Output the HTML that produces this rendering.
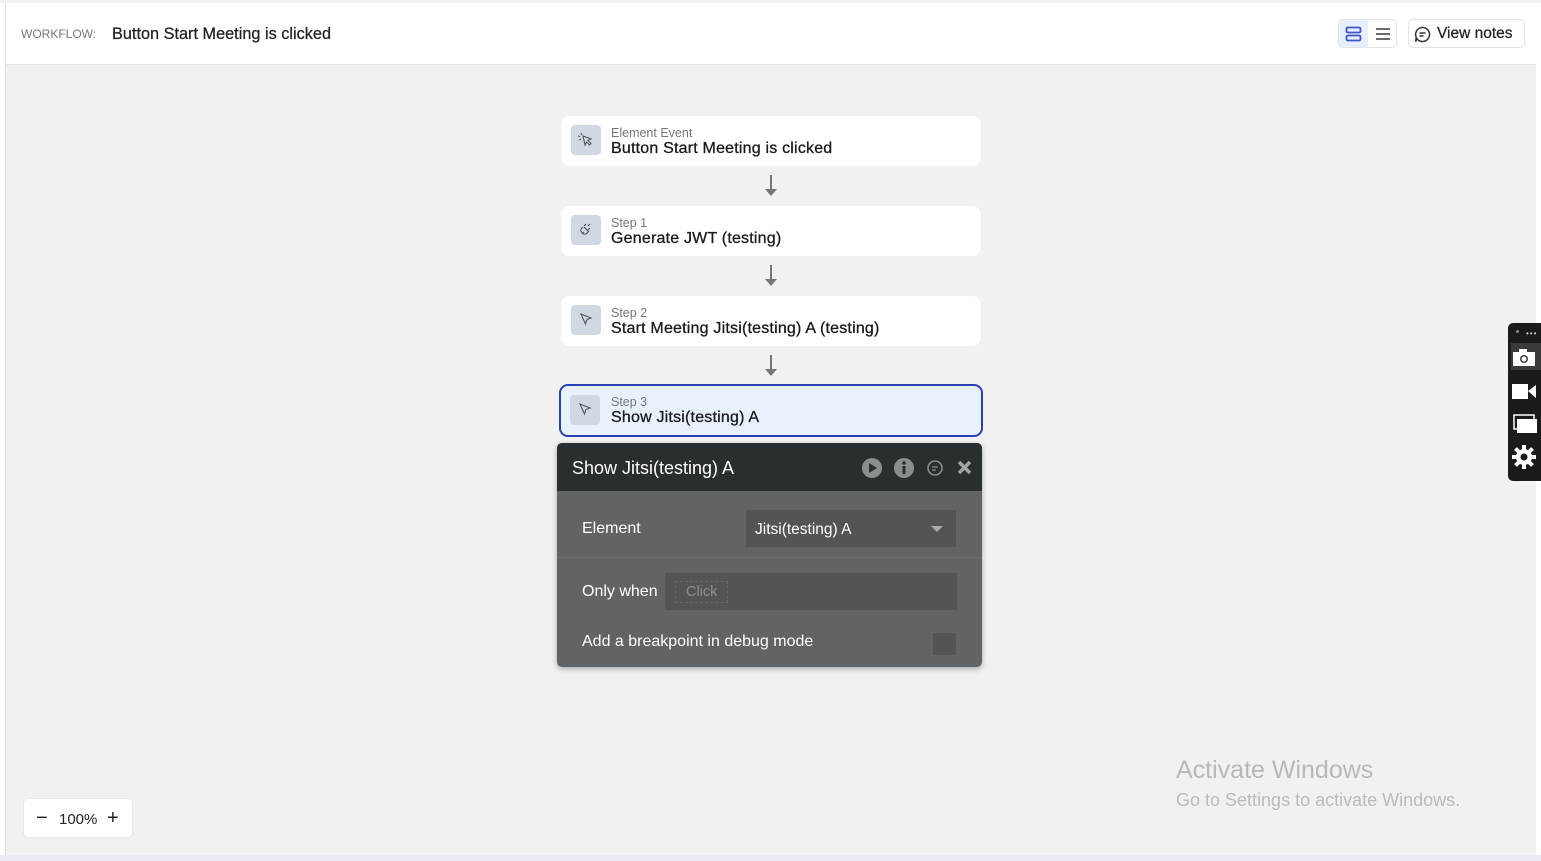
<!DOCTYPE html>
<html><head><meta charset="utf-8"><style>
*{box-sizing:border-box;margin:0;padding:0}
body{width:1541px;height:861px;background:#fff;font-family:"Liberation Sans",sans-serif;position:relative;overflow:hidden;color:#1d1d1d}
.topline{position:absolute;left:0;top:0;width:1541px;height:3px;background:#f3f3f3}
.leftline{position:absolute;left:5px;top:3px;width:1px;height:855px;background:#e0e0e0}
.header{position:absolute;left:6px;top:3px;width:1530px;height:62px;background:#fff;border-bottom:1px solid #e2e2e2}
.wf{position:absolute;left:15px;top:24px;font-size:12px;color:#777}
.wft{position:absolute;left:106px;top:22px;font-size:16.3px;color:#222;-webkit-text-stroke:0.25px #222}
.canvas{position:absolute;left:6px;top:65px;width:1530px;height:790px;background:#f1f1f1}
.bottom{position:absolute;left:0;top:855px;width:1541px;height:6px;background:#e8ecf2}
.tog{position:absolute;left:1338px;top:19px;width:59px;height:29px;border:1px solid #e3e3e3;border-radius:5px;background:#fff}
.tog .a{position:absolute;left:0;top:0;width:29px;height:27px;background:#e8effc;border-radius:4px 0 0 4px}
.vn{position:absolute;left:1408px;top:19px;width:117px;height:29px;border:1px solid #e3e3e3;border-radius:5px;background:#fff;font-size:15.5px;color:#222;-webkit-text-stroke:0.25px #222}
.card{position:absolute;left:561px;width:420px;height:50px;background:#fff;border-radius:9px}
.card .ic{position:absolute;left:10px;top:9px;width:30px;height:30px;background:#cfd8e3;border-radius:4px}
.card .s{position:absolute;left:50px;top:10px;font-size:12.5px;color:#777}
.card .t{position:absolute;left:50px;top:24px;font-size:16px;color:#1a1a1a;-webkit-text-stroke:0.3px #1a1a1a;letter-spacing:0.2px}
.arr{position:absolute;left:770px;width:2px;height:16px;background:#777}
.arr:after{content:"";position:absolute;left:-5px;top:14px;border-left:6px solid transparent;border-right:6px solid transparent;border-top:7px solid #777}
.panel{position:absolute;left:557px;top:443px;width:425px;height:224px;background:#606467;border-radius:5px;box-shadow:0 2px 6px rgba(0,0,0,.3);overflow:hidden}
.ph{height:48px;background:#292e30;color:#fff;font-size:18px;padding:15px 15px}
.lb{position:absolute;left:25px;color:#fff;font-size:16px}
.side{position:absolute;left:1508px;top:323px;width:33px;height:158px;background:#1b1b1b;border-radius:5px 0 0 5px}
</style></head><body>
<div class="topline"></div>
<div class="header">
<div class="wf">WORKFLOW:</div>
<div class="wft">Button Start Meeting is clicked</div>
</div>
<div class="tog"><div class="a"></div>
<svg style="position:absolute;left:6px;top:6px" width="17" height="16"><rect x="1.5" y="1.5" width="14" height="5" rx="1.5" fill="none" stroke="#3a57c7" stroke-width="1.8"/><rect x="1.5" y="9.5" width="14" height="5" rx="1.5" fill="none" stroke="#3a57c7" stroke-width="1.8"/></svg>
<svg style="position:absolute;left:36px;top:7px" width="16" height="14"><path d="M1 2h14M1 7h14M1 12h14" stroke="#555" stroke-width="1.8"/></svg>
</div>
<div class="vn"><svg style="position:absolute;left:5px;top:6px" width="17" height="17"><path d="M8.5 1.5a7 7 0 1 1-5.5 11.3L1.5 15.5l.8-4A7 7 0 0 1 8.5 1.5z" fill="none" stroke="#333" stroke-width="1.5"/><path d="M5.5 7h6M5.5 10h4" stroke="#333" stroke-width="1.4"/></svg><span style="position:absolute;left:28px;top:5px">View notes</span></div>
<div class="leftline"></div>
<div class="canvas"></div>
<div class="bottom"></div>

<div class="card" style="top:116px"><div class="ic"><svg width="30" height="30"><path d="M12 11l8 3-3 1.5 3 3-1.5 1.5-3-3L14 20z" fill="none" stroke="#555" stroke-width="1.1"/><path d="M10 8l1 2M7 11l2 .5M8 15l2-1" stroke="#555" stroke-width="1"/></svg></div><div class="s">Element Event</div><div class="t">Button Start Meeting is clicked</div></div>
<div class="arr" style="top:175px"></div>
<div class="card" style="top:206px"><div class="ic"><svg width="30" height="30"><path d="M13 12l5 5M11 19l2-2M17 11l2-2M12 12l-1.5 1.5a2.5 2.5 0 0 0 0 3.5l1.5 1.5a2.5 2.5 0 0 0 3.5 0L17 17M13 11l2-2M17 15l2-2" fill="none" stroke="#555" stroke-width="1.1"/></svg></div><div class="s">Step 1</div><div class="t">Generate JWT (testing)</div></div>
<div class="arr" style="top:265px"></div>
<div class="card" style="top:296px"><div class="ic"><svg width="30" height="30"><path d="M10 9l10 4-4 1.5-1.5 4.5z" fill="none" stroke="#555" stroke-width="1.1"/></svg></div><div class="s">Step 2</div><div class="t">Start Meeting Jitsi(testing) A (testing)</div></div>
<div class="arr" style="top:355px"></div>
<div class="card" style="top:384px;left:559px;width:424px;height:53px;background:#e9f1fc;border:2px solid #2a3fb0"><div class="ic" style="left:9px;top:9px"><svg width="30" height="30"><path d="M10 9l10 4-4 1.5-1.5 4.5z" fill="none" stroke="#555" stroke-width="1.1"/></svg></div><div class="s" style="left:50px;top:9px">Step 3</div><div class="t" style="left:50px;top:23px">Show Jitsi(testing) A</div></div>

<div class="panel">
<div class="ph">Show Jitsi(testing) A</div>
<svg style="position:absolute;left:305px;top:15px" width="115" height="20">
<circle cx="10" cy="10" r="10" fill="#8a8e91"/><path d="M7 5l8 5-8 5z" fill="#292e30"/>
<circle cx="42" cy="10" r="10" fill="#8a8e91"/><rect x="40.5" y="8" width="3" height="8" fill="#292e30"/><circle cx="42" cy="5" r="1.7" fill="#292e30"/>
<circle cx="73" cy="10" r="7" fill="none" stroke="#8a8e91" stroke-width="1.6"/><path d="M70 9h6M70 12h4" stroke="#8a8e91" stroke-width="1.3"/>
<path d="M97 4l11 11M108 4L97 15" stroke="#a0a4a7" stroke-width="3.5"/>
</svg>
<div class="lb" style="top:77px">Element</div>
<div style="position:absolute;left:189px;top:67px;width:210px;height:37px;background:#515558"><span style="position:absolute;left:9px;top:11px;color:#fff;font-size:15.5px">Jitsi(testing) A</span><div style="position:absolute;right:13px;top:16px;border-left:6px solid transparent;border-right:6px solid transparent;border-top:6px solid #aaa"></div></div>
<div style="position:absolute;left:0;top:114px;width:425px;height:1px;background:#6a6e71"></div>
<div class="lb" style="top:140px">Only when</div>
<div style="position:absolute;left:108px;top:130px;width:292px;height:37px;background:#515558"><span style="position:absolute;left:10px;top:8px;border:1px dashed #666;padding:2px 10px;color:#8c8f91;font-size:14.5px">Click</span></div>
<div class="lb" style="top:190px">Add a breakpoint in debug mode</div>
<div style="position:absolute;left:376px;top:190px;width:23px;height:22px;background:#515558"></div>
</div>

<div class="side">
<div style="position:absolute;left:8px;top:7px;width:3px;height:3px;border-radius:50%;background:#888"></div>
<div style="position:absolute;left:18px;top:6px;color:#ccc;font-size:8px;letter-spacing:1px">•••</div>
<div style="position:absolute;left:3px;top:20px;width:30px;height:27px;background:#3a3a3a"></div>
<svg style="position:absolute;left:4px;top:25px" width="26" height="130">
<rect x="1" y="4" width="22" height="14" fill="#fff"/><rect x="7" y="1" width="8" height="4" fill="#fff"/><circle cx="12" cy="11" r="4" fill="#3a3a3a"/><circle cx="12" cy="11" r="2.5" fill="#fff"/>
<rect x="0" y="36" width="16" height="15" fill="#fff"/><path d="M16 43l8-6v13z" fill="#fff"/>
<rect x="2" y="67" width="20" height="14" fill="none" stroke="#fff" stroke-width="1.5"/><rect x="5" y="71" width="20" height="14" fill="#fff"/>
<circle cx="12" cy="109" r="8" fill="#fff"/><path d="M12 97v24M0 109h24M3.5 100.5l17 17M20.5 100.5l-17 17" stroke="#fff" stroke-width="4"/><circle cx="12" cy="109" r="3.5" fill="#1b1b1b"/>
</svg>
</div>

<div style="position:absolute;left:23px;top:798px;width:110px;height:40px;background:#fff;border-radius:5px;border:1px solid #e8e8e8;font-size:15px;color:#222">
<span style="position:absolute;left:12px;top:9px;font-size:20px;line-height:20px">−</span>
<span style="position:absolute;left:35px;top:12px">100%</span>
<span style="position:absolute;left:83px;top:9px;font-size:20px;line-height:20px">+</span>
</div>

<div style="position:absolute;left:1176px;top:756px;color:#b8b8b8;font-size:25px">Activate Windows</div>
<div style="position:absolute;left:1176px;top:790px;color:#bbb;font-size:18px">Go to Settings to activate Windows.</div>
</body></html>
